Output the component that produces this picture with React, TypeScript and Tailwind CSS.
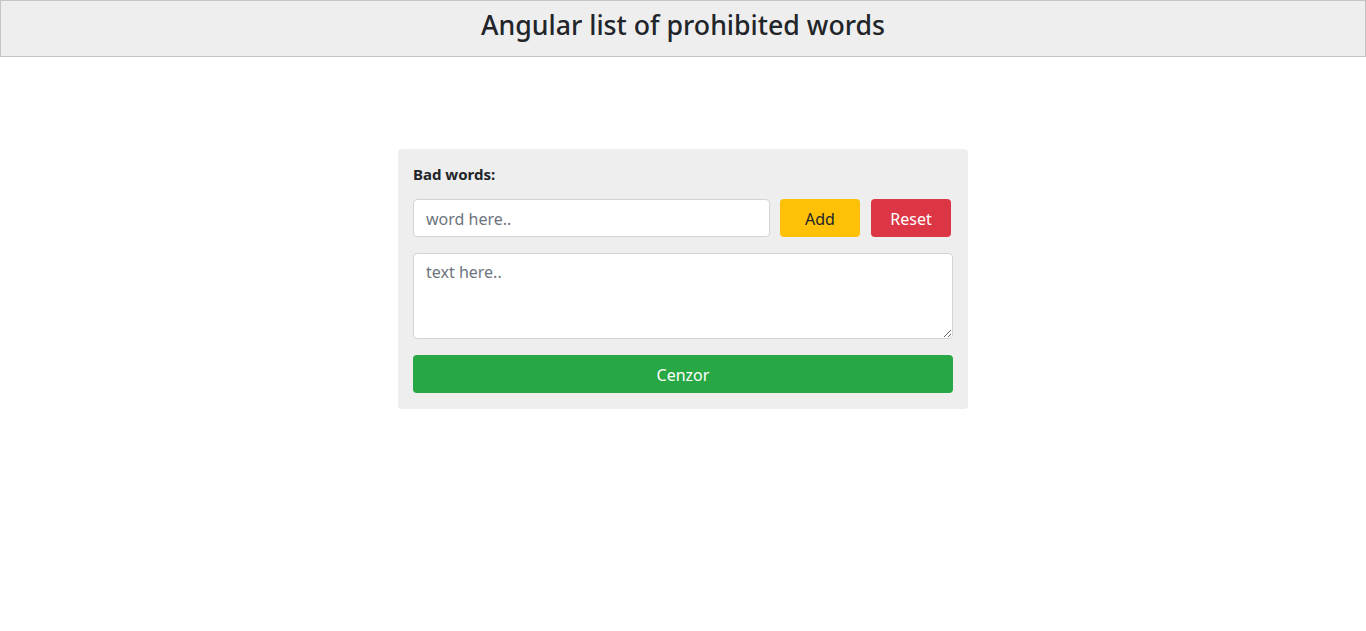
import React from "react";

export default function App() {
  const font = { fontFamily: '"Noto Sans", "Open Sans", sans-serif' };
  return (
    <div className="min-h-[631px] bg-white text-[#212529]" style={font}>
      <header className="h-[57px] border border-[#c4c4c4] bg-[#eeeeee] flex items-center justify-center">
        <h1 className="text-[26.7px] font-medium leading-[1.2] mb-[6px]">Angular list of prohibited words</h1>
      </header>
      <div className="flex justify-center pt-[92px]">
        <div className="w-[570px] bg-[#eeeeee] rounded-[4px] px-[15px] pt-[13px] pb-[16px]">
          <label className="block text-[15px] font-bold leading-[24px] mb-[13px]">Bad words:</label>
          <div className="flex items-center">
            <input
              className="w-[357px] h-[38px] bg-white border border-[#ced4da] rounded-[4px] px-[12px] pt-[2px] text-[16px] placeholder:text-[#6c757d] outline-none"
              placeholder="word here.."
            />
            <button className="ml-[10px] w-[80px] h-[38px] pt-[1px] rounded-[4px] bg-[#ffc107] text-[16px] text-[#212529]">Add</button>
            <button className="ml-[11px] w-[80px] h-[38px] pt-[1px] rounded-[4px] bg-[#dc3545] text-[16px] text-white">Reset</button>
          </div>
          <textarea
            className="mt-[16px] block w-[540px] h-[86px] bg-white border border-[#ced4da] rounded-[4px] px-[12px] py-[6px] text-[16px] placeholder:text-[#6c757d] outline-none"
            placeholder="text here.."
          />
          <button className="mt-[16px] block w-[540px] h-[38px] pt-[1px] rounded-[4px] bg-[#28a745] text-white text-[16px]">Cenzor</button>
        </div>
      </div>
    </div>
  );
}
